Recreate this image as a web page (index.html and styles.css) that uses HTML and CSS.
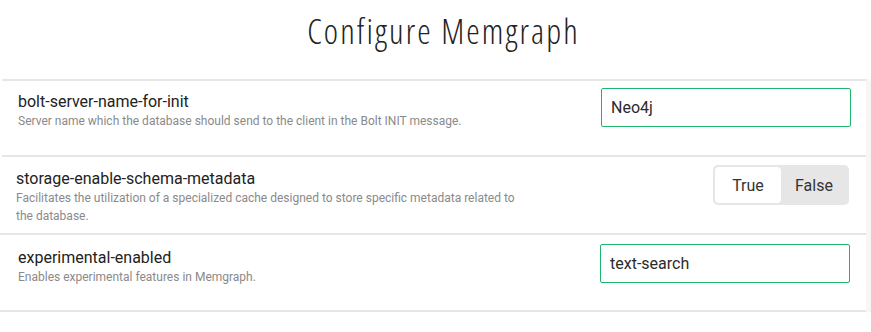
FILE: index.html
```html
<!DOCTYPE html>
<html lang="en">
<head>
<meta charset="utf-8">
<title>Configure Memgraph</title>
<link rel="stylesheet" href="styles.css">
</head>
<body>
<div class="page">
  <h1 class="title">Configure Memgraph</h1>
  <div class="panel">
    <div class="list">
      <div class="row row--first">
        <div class="info">
          <div class="name">bolt-server-name-for-init</div>
          <div class="desc">Server name which the database should send to the client in the Bolt INIT message.</div>
        </div>
        <div class="field">Neo4j</div>
      </div>
      <div class="row row--second">
        <div class="info">
          <div class="name">storage-enable-schema-metadata</div>
          <div class="desc">Facilitates the utilization of a specialized cache designed to store specific metadata related to the database.</div>
        </div>
        <div class="toggle">
          <span class="opt opt--on">True</span>
          <span class="opt">False</span>
        </div>
      </div>
      <div class="row row--third">
        <div class="info">
          <div class="name">experimental-enabled</div>
          <div class="desc">Enables experimental features in Memgraph.</div>
        </div>
        <div class="field">text-search</div>
      </div>
    </div>
    <div class="track"></div>
  </div>
</div>
</body>
</html>
```
FILE: styles.css
```css
* { box-sizing: border-box; }
html, body { margin: 0; padding: 0; background: #ffffff; }
body {
  font-family: Roboto, "Liberation Sans", Arial, sans-serif;
  color: #2b2b2b;
  width: 871px;
  height: 332px;
  overflow: hidden;
}
.page { display: flex; flex-direction: column; }
.title {
  margin: 0;
  height: 79px;
  padding-top: 9px;
  padding-left: 16px;
  text-align: center;
  font-family: "Open Sans", "DejaVu Sans", sans-serif;
  font-stretch: 75%;
  font-weight: 300;
  font-size: 34px;
  line-height: 44px;
  letter-spacing: 2.1px;
  color: #222222;
}
.panel { display: flex; }
.list { width: 866px; display: flex; flex-direction: column; }
.track { width: 5px; background: #f7f7f7; }
.row {
  display: flex;
  justify-content: space-between;
  align-items: flex-start;
  min-height: 78px;
  padding: 8px 17px 8px 16px;
  border-bottom: 2px solid #e6e6e6;
}
.row--first {
  margin-left: 2px;
  border-top: 2px solid #e6e6e6;
  min-height: 78px;
  padding-top: 7px;
  padding-right: 15px;
}
.row--third { min-height: 77px; padding-top: 9px; padding-left: 18px; padding-right: 16px; }
.info { padding-top: 4px; }
.name {
  font-size: 16px;
  line-height: 20px;
  color: #222222;
}
.desc {
  font-size: 12px;
  line-height: 18px;
  color: #8a8a8a;
  max-width: 510px;
}
.field {
  width: 250px;
  height: 39px;
  border: 1px solid #1fb56c;
  border-radius: 2px;
  padding-left: 9px;
  display: flex;
  align-items: center;
  font-size: 16px;
  color: #2b2b2b;
}
.toggle {
  display: flex;
  width: 136px;
  height: 40px;
  padding: 2px;
  background: #e6e6e6;
  border-radius: 5px;
}
.opt {
  flex: 1;
  display: flex;
  align-items: center;
  justify-content: center;
  font-size: 16px;
  color: #333333;
  border-radius: 4px;
}
.opt--on { background: #ffffff; }
```
